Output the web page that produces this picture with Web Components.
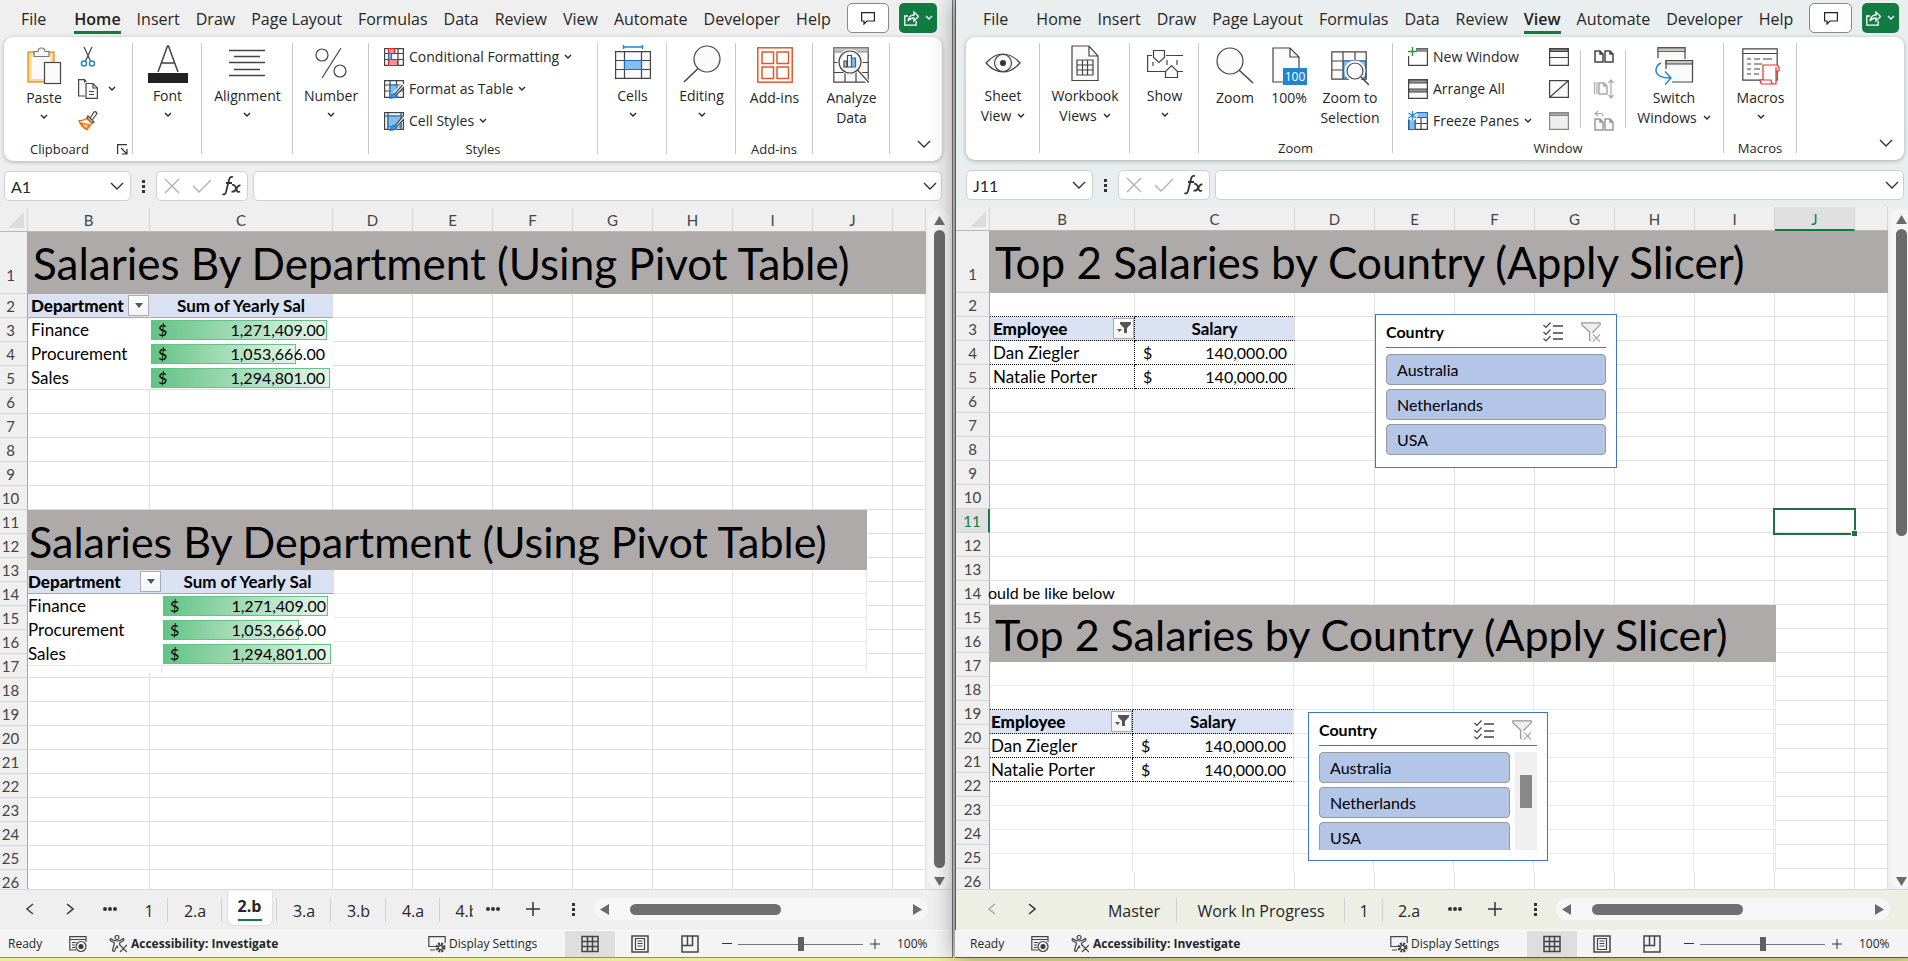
<!DOCTYPE html>
<html lang="en">
<head>
<meta charset="utf-8">
<title>Salaries workbook</title>
<style>
html,body{margin:0;height:100%;overflow:hidden}
body{font:14px/20px "Open Sans","Noto Sans",sans-serif;color:#262626;background:#eceb98}
</style>
</head>
<body>
<desk-top>
  <app-window>
    <menu-bar active="Home"></menu-bar>
    <ribbon-bar>
      <ribbon-group label="Clipboard" kind="clip" launcher style="--gw:129px">
        <big-button icon="paste" label="Paste" low chev style="--w:56px"></big-button>
        <small-stack>
          <small-button icon="cut" name="Cut"></small-button>
          <small-button icon="copy" name="Copy" chev></small-button>
          <small-button icon="brush" name="Format Painter"></small-button>
        </small-stack>
      </ribbon-group>
      <ribbon-group style="--gw:69px"><big-button icon="font" label="Font" chev></big-button></ribbon-group>
      <ribbon-group style="--gw:91px"><big-button icon="align" label="Alignment" chev></big-button></ribbon-group>
      <ribbon-group style="--gw:76px"><big-button icon="percent" label="Number" chev></big-button></ribbon-group>
      <ribbon-group label="Styles" kind="list" style="--gw:229px">
        <small-stack>
          <small-button icon="cond" label="Conditional Formatting" chev></small-button>
          <small-button icon="ftable" label="Format as Table" chev></small-button>
          <small-button icon="cstyle" label="Cell Styles" chev></small-button>
        </small-stack>
      </ribbon-group>
      <ribbon-group style="--gw:69px"><big-button icon="cells" label="Cells" chev></big-button></ribbon-group>
      <ribbon-group style="--gw:69px"><big-button icon="editing" label="Editing" chev></big-button></ribbon-group>
      <ribbon-group label="Add-ins" style="--gw:77px"><big-button icon="addins" label="Add-ins" low></big-button></ribbon-group>
      <ribbon-group style="--gw:77px"><big-button icon="analyze" label="Analyze|Data" low></big-button></ribbon-group>
    </ribbon-bar>
    <formula-bar cell="A1"></formula-bar>
    <sheet-grid sheet="pivot"></sheet-grid>
    <sheet-tabs tabs="…:40,1:38,2.a:54,2.b:55,3.a:54,3.b:55,4.a:54,4.b:54" active="2.b"></sheet-tabs>
    <status-bar></status-bar>
  </app-window>
  <app-window front>
    <menu-bar active="View"></menu-bar>
    <ribbon-bar>
      <ribbon-group style="--gw:74px"><big-button icon="eye" label="Sheet|View" chev inline></big-button></ribbon-group>
      <ribbon-group style="--gw:90px"><big-button icon="workbook" label="Workbook|Views" chev inline></big-button></ribbon-group>
      <ribbon-group style="--gw:69px"><big-button icon="show" label="Show" chev></big-button></ribbon-group>
      <ribbon-group label="Zoom" kind="zoom" style="--gw:194px">
        <big-button icon="zoom" label="Zoom" low style="--w:56px"></big-button>
        <big-button icon="hundred" label="100%" low style="--w:52px"></big-button>
        <big-button icon="zoomsel" label="Zoom to|Selection" low style="--w:70px"></big-button>
      </ribbon-group>
      <ribbon-group label="Window" kind="list" style="--gw:331px">
        <small-stack style="--w:141px">
          <small-button icon="newwin" label="New Window"></small-button>
          <small-button icon="arrange" label="Arrange All"></small-button>
          <small-button icon="freeze" label="Freeze Panes" chev></small-button>
        </small-stack>
        <small-stack rule style="--w:32px">
          <small-button icon="split" name="Split"></small-button>
          <small-button icon="hide" name="Hide"></small-button>
          <small-button icon="unhide" name="Unhide"></small-button>
        </small-stack>
        <small-stack rule style="--w:32px">
          <small-button icon="side" name="View Side by Side"></small-button>
          <small-button icon="sync" name="Synchronous Scrolling"></small-button>
          <small-button icon="reset" name="Reset Window Position"></small-button>
        </small-stack>
        <big-button icon="switch" label="Switch|Windows" low chev inline style="--w:70px"></big-button>
      </ribbon-group>
      <ribbon-group label="Macros" style="--gw:73px"><big-button icon="macros" label="Macros" low chev></big-button></ribbon-group>
    </ribbon-bar>
    <formula-bar cell="J11"></formula-bar>
    <sheet-grid sheet="slicer"></sheet-grid>
    <sheet-tabs start tabs=":40,Master:86,Work In Progress:168,1:38,2.a:52"></sheet-tabs>
    <status-bar></status-bar>
  </app-window>
</desk-top>
<script>
const RESET = `:host,*{box-sizing:border-box}button,input{font:inherit;color:inherit;background:none;border:0;padding:0;margin:0;outline:0}svg{display:block}`;
function define(name, render) {
  customElements.define(name, class extends HTMLElement {
    connectedCallback() {
      if (this.shadowRoot) return;
      const t = document.createElement('template');
      t.innerHTML = render(this);
      this.attachShadow({mode: 'open'}).append(t.content.cloneNode(true));
    }
  });
}
const svg = (w, h, body) => `<svg width="${w}" height="${h}" viewBox="0 0 ${w} ${h}" fill="none" stroke="#444" stroke-width="1.2">${body}</svg>`;
const G = '#444', B = '#1a6fc0', LB = '#83beec';
const CHEV = `<svg width="8" height="6" viewBox="0 0 8 6" fill="none" stroke="#262626" stroke-width="1.4"><path d="M1 1l3 3 3-3"/></svg>`;
const BIGCHEV = `<svg width="14" height="8" viewBox="0 0 14 8" fill="none" stroke="#333" stroke-width="1.4"><path d="M1 1l6 6 6-6"/></svg>`;
const page = (x, y, c) => `<path stroke="${c}" stroke-width="1.5" fill="#fafafa" d="M${x} ${y}h5l3 3v8h-8zM${x+5} ${y}v3h3"/>`;
const ICONS = {
  paste: svg(36,38,`<rect x="2" y="5" width="26" height="30" fill="#f8dc8e" stroke="#e8811a"/><rect x="5.500" y="8" width="19" height="24" fill="#fafafa" stroke="none"/><path d="M8 9.500V4.500h4a3.500 3.500 0 0 1 7 0h4v5z" fill="#f5f5f5" stroke="#7a7974"/><rect x="18.500" y="15.500" width="16" height="21" fill="#fafafa"/>`),
  cut: svg(20,20,`<path d="M6 0l6.500 14M14 0L7.500 14"/><circle cx="6" cy="16.500" r="2.500" stroke="#1e8bcd" stroke-width="1.500"/><circle cx="14" cy="16.500" r="2.500" stroke="#1e8bcd" stroke-width="1.500"/>`),
  copy: svg(20,20,`<path d="M7 17H.6V.6h6L8.500 3M6.500 .6v3"/><path d="M8 4.500h7l4.400 4.400v10.500H8zM15 4.500v4.500h4.400" fill="#fafafa"/><path d="M11 12.500h5M11 15.500h5"/>`),
  brush: svg(20,20,`<path d="M10 5l6 6-2 1-5-5zM12.500 6.500l3.500-5.500q2-1 3 1.500l-4.500 6" fill="#fafafa"/><path d="M8.500 7.500l5.500 5-5 6Q3 16 1 9.500q4 .5 7.500-2z" stroke="#e2700d" fill="#fff"/><path d="M3 12l8 1.500-2 5-3-2z" fill="#f8c26a" stroke="#e2700d"/>`),
  font: svg(40,38,`<path d="M10 27L19.500 1h1L30 27M13.500 18h13" stroke-width="1.500"/><rect x="0" y="28" width="40" height="10" fill="#222" stroke="none"/>`),
  align: svg(36,38,`<path d="M0 5.500h36M5 11.500h26M0 17.500h36M5 24.500h26M0 30.500h36" stroke-width="1.400"/>`),
  percent: svg(32,38,`<circle cx="7" cy="10" r="6"/><circle cx="25" cy="26" r="6"/><path d="M26 3L7 33"/>`),
  cond: svg(20,20,`<path d="M.6 1.600h18.800v16.800H.6zM.6 6.500h18.800M.6 12.500h18.800M14 1v17" fill="#fafafa"/><path d="M4.500 1.500h6v5h-6zM4.500 12.500h9v6h-9z" fill="#f49097" stroke="#dd2020"/><path d="M4.500 6.500h3v6h-3z" fill="${LB}" stroke="${B}"/>`),
  ftable: svg(20,20,`<path d="M.6 1.600h18.800v16.800H.6zM.6 6h18.800M.6 12h18.800M6 1v17M12.500 1v17" fill="#fafafa"/><path d="M6 6h7v12H6z" fill="${LB}" stroke="${B}"/><path d="M7 17l11-12 2 1-9 12z" fill="#fff" stroke="#fff"/><path d="M18.500 6L11 14.500l1.500 1.500L20 8"/><path d="M10.500 14.500q2.500 0 2 2.500-1.500 2.500-7.500 2 3-1 2.500-3 1-1.500 3-1.500z" fill="#3a96dd" stroke="${B}"/>`),
  cstyle: svg(20,20,`<path d="M.6 1.600h18.800v16.800H.6zM.6 5h18.800M4 1v17M17 1v17" fill="#fafafa"/><path d="M4 5h13v11H4z" fill="${LB}" stroke="${B}"/><path d="M9 17l10-11 1 1-8 11z" fill="#fff" stroke="#fff"/><path d="M18.500 6L11 14.500l1.500 1.500L20 8"/><path d="M10.500 14.500q2.500 0 2 2.500-1.500 2.500-7.500 2 3-1 2.500-3 1-1.500 3-1.500z" fill="#3a96dd" stroke="${B}"/>`),
  cells: svg(36,38,`<path d="M8.500 0v4M27.500 0v4M8.500 2h19" stroke="#1e8bcd" stroke-width="1.500"/><path d="M.6 6.600h34.800v26.800H.6zM.6 15.500h34.800M.6 24.500h34.800M9.500 6v27M26.500 6v27" fill="#fafafa"/><path d="M9.500 15.500h17v9h-17z" fill="${LB}" stroke="${B}"/>`),
  editing: svg(38,38,`<circle cx="24" cy="14" r="13" fill="#fafafa"/><path d="M15 23.500L1 37" stroke-width="1.500"/>`),
  addins: svg(36,38,`<g stroke="#dc5a2e" stroke-width="1.500"><rect x=".8" y=".8" width="34.400" height="34.400"/><rect x="5" y="5" width="11.500" height="11.500"/><rect x="20" y="5" width="11.500" height="11.500"/><rect x="5" y="20" width="11.500" height="11.500"/><rect x="20" y="20" width="11.500" height="11.500"/></g>`),
  analyze: svg(36,38,`<path d="M.8 .8h34.400v34.400H.8z" fill="#fafafa"/><path d="M1 1h34v4H1z" fill="#c8c6c4" stroke="#888"/><path d="M1 15.500h34M1 25.500h34M12 25v10M23 25v10"/><circle cx="17" cy="15" r="11" fill="#fff" stroke="#fff" stroke-width="3"/><path d="M24 23l11 12" stroke="#fff" stroke-width="4"/><circle cx="17" cy="15" r="11" fill="#fafafa"/><path d="M11 20v-6h3v6z" fill="#c8c6c4"/><path d="M14.500 20V8.500h4V20z" fill="#fff"/><path d="M18.500 20v-9h4v9z" fill="${LB}" stroke="${B}"/><path d="M24.500 23l11 12"/>`),
  eye: svg(36,38,`<path d="M1 18Q9 9 18 9t17 9Q27 27 18 27T1 18z" fill="#fafafa"/><circle cx="18" cy="18" r="8.500"/><circle cx="18" cy="18" r="2.500" fill="#333"/>`),
  workbook: svg(28,38,`<path d="M1 1h17l9 10v24.500H1zM18 1v10h9" fill="#fafafa"/><path d="M6 15h16v15H6zM6 20h16M6 25h16M11.500 15v15M16.500 15v15"/>`),
  show: svg(36,38,`<path d="M5 10.500H.6v16H18M19 10.500h17M31 26.500h5M6 17v4M20 15v5M30 15v5"/><path d="M6.500 5.500h11v7l-5.500 5-5.500-5zM18.500 32.500h12v-6l-6-6-6 6z" fill="#fafafa"/>`),
  zoom: svg(38,38,`<circle cx="14" cy="14" r="13" fill="#fafafa"/><path d="M23 23l14 13" stroke-width="1.500"/>`),
  hundred: svg(36,38,`<path d="M2 1h17l9 9v25H2zM19 1v9h9" fill="#fafafa"/><path d="M12 21h24v17H12z" fill="#1e86cf" stroke="none"/><text x="24" y="34" text-anchor="middle" font-family="Open Sans" font-size="12" fill="#fff" stroke="none">100</text>`),
  zoomsel: svg(38,38,`<path d="M.8 4.800h34.400v27.400H.8zM.8 14h34.400M.8 23h34.400M12 5v27M24 5v27" fill="#fafafa"/><path d="M12.500 14h22v17h-22z" fill="${LB}" stroke="${B}"/><circle cx="24" cy="24" r="9" fill="#fafafa" stroke="#fff" stroke-width="3"/><circle cx="24" cy="24" r="8" fill="#fafafa"/><path d="M30 30l8 8" stroke-width="1.500"/>`),
  newwin: svg(20,20,`<path d="M8 1.600h11.400v16.800H.6V9M8 4h11" fill="none"/><path d="M8 1.500h11.500V4H8z" fill="#888" stroke="none"/><path d="M4.500 0v9M0 4.500h9" stroke="#2a9a4a" stroke-width="1.500"/>`),
  arrange: svg(20,20,`<path d="M.6 .6h18.800v18.800H.6z" fill="#fafafa"/><path d="M1 1h18v3H1zM1 10h18v3H1z" fill="#999"/>`),
  freeze: svg(20,20,`<path d="M6 1.600h13.400v16.800H.6V9M.6 12.500H19M7 6.500v12M13 2v16" fill="none"/><path d="M7 1.500h12.500v5H7zM1 7h6v11.500H1z" fill="${LB}" stroke="${B}"/><circle cx="4.500" cy="4.500" r="5" fill="#fff" stroke="none"/><path d="M4.500 0v9M.5 2l8 5M8.500 2l-8 5" stroke="#1e86cf"/>`),
  split: svg(20,20,`<path d="M.6 1.600h18.800v16.800H.6zM.6 10.500h18.800" fill="#fafafa"/><path d="M1 2h18v2.500H1z" fill="#888"/>`),
  hide: svg(20,20,`<path d="M.6 1.600h18.800v16.800H.6zM1 18L19 2" fill="#fafafa"/>`),
  unhide: svg(20,20,`<path d="M.6 1.600h18.800v16.800H.6z" fill="#eee" stroke="#888"/><path d="M1 2h18v2.500H1z" fill="#aaa" stroke="#888"/>`),
  side: svg(20,20,`${page(1,4,G)}${page(11,4,G)}`),
  sync: svg(20,20,`<path d="M.6 3v12M3 3v12" stroke="#aaa"/>${page(5,4,'#aaa')}<path d="M17 1v18M14.500 4L17 1l2.500 3M14.500 16l2.500 3 2.500-3" stroke="#aaa"/>`),
  reset: svg(20,20,`${page(1,8,'#999')}${page(11,8,'#999')}<path d="M1 2.500h6q2 0 2 3M4 0L1 2.500 4 5" stroke="#aaa"/>`),
  switch: svg(40,38,`<path d="M4 11V.6h27V12" fill="#fafafa"/><path d="M4 1h27v3.500H4z" fill="#c8c6c4" stroke="#666"/><path d="M12 13.500h26.500v21.500H18M12 13v9" fill="#fafafa"/><path d="M12 13.500h26.500V17H12z" fill="#c8c6c4"/><path d="M7 16q-5 2-5 8 1 7 15 7M11 24.500l6 6.500-6 6.500" stroke="#1e8bcd" stroke-width="1.500"/>`),
  macros: svg(38,38,`<path d="M.8 1.800h34.400v31.400H.8zM.8 6.500h34.400" fill="#fafafa"/><path d="M5 12h4M5 17h4M5 22h4M5 27h4M12 12h6M21 12h9M12 17h8M12 22h6M12 27h5"/><path d="M21 33V18h13q3 0 3 3v3h-3v13H20q-2-1-2-4h11q0 4 3 4M34 24v-4" fill="#fff" stroke="#e83030"/>`),
  fx: `<svg width="20" height="22" viewBox="0 0 20 22" fill="none" stroke="#333" stroke-width="1.800"><path d="M11 2q-3-1-4 3L4 17q-1 3.500-3.500 2M4 8h6"/><path d="M10 10q3-1 4 3.500 1 4.500 4 3M18.500 10.500q-2-1-4 3-2 4-5 3" /></svg>`,
  macrorec: svg(18,18,`<path d="M17 7V1.600H.8V15H7M.8 4.500H17M3 7.500h4M3 10h3M3 12.500h3"/><circle cx="12" cy="11.500" r="5"/><circle cx="12" cy="11.500" r="2" fill="#333"/>`),
  access: svg(18,18,`<circle cx="8" cy="2.500" r="2"/><path d="M1.500 3.500q3 2.500 6.500 2.500t6.500-2.500q1 1.500-.5 2.500L10.500 8l.5 3M1.500 3.500q-1 1.500.5 2.500l3.500 2-2 7.500q1 1.500 2 .5L8 11l1 2M11 10l7 7M18 10l-7 7"/>`),
  display: svg(18,18,`<path d="M8 11.500H.8V1.600h16.400V8M2 15h5"/><circle cx="12.500" cy="12.500" r="3.800" stroke-width="2.500" stroke-dasharray="2 1"/><circle cx="12.500" cy="12.500" r="2.200"/>`),
  vgrid: svg(18,18,`<path d="M1 1.500h16v15H1zM1 6.500h16M1 11.500h16M6.500 1v16M11.500 1v16" stroke-width="1.500"/>`),
  vpage: svg(18,18,`<path d="M1 1h16v16H1z" stroke-width="1.500"/><path d="M4.500 3.500h9v11h-9zM6.500 6h5M6.500 8.500h5M6.500 11h5"/>`),
  vbreak: svg(18,18,`<path d="M1 1h16v16H1zM1 10.500h10.500V1M6.500 1v9" stroke-width="1.500"/>`),
  check: svg(20,20,`<path d="M10 4h10M10 11h10M10 17h10" stroke-width="1.600"/><path d="M.5 3l2.500 2.500L7.500 .5M.5 10L3 12.500 7.500 7.500M.5 16.500L3 19l4.500-5"/>`),
  clear: svg(20,20,`<path d="M.8 .8h18.400v2L12 10v9.500L8.500 18v-8L.8 2.800z" fill="#eee" stroke="#999"/><path d="M11 12l8 8M19 12l-8 8" stroke="#fff" stroke-width="4"/><path d="M12 12.500l7 7M19 12.500l-7 7" stroke="#aaa"/>`)
};
define('ui-icon', e => `<style>:host{display:block;flex:none}svg{display:block}</style>${ICONS[e.getAttribute('name')]}`);
const ico = n => `<ui-icon name="${n}"></ui-icon>`;

define('desk-top', () => `<style>${RESET}:host{display:grid;grid-template-columns:minmax(0,1fr) minmax(0,1fr);gap:2px;height:100vh;margin:0 -7px;padding-bottom:3px;background:linear-gradient(#eceb98,#eceb98) bottom/100% 3px no-repeat,#c9cccc}</style><slot></slot>`);

define('app-window', () => `<style>${RESET}
:host{display:flex;flex-direction:column;min-width:0;min-height:0;padding-left:7px;background:#efefef;border-right:1px solid #777;border-bottom:1px solid #8a8a8a;--rib:124px;position:relative}
:host([front]){padding-left:6px;border-left:1px solid #107c41;border-bottom-color:#107c41;background:linear-gradient(#eaeeef,#e8eeed 200px,#edeee4 700px);box-shadow:0 0 22px rgba(0,0,0,.4);--rib:123px;z-index:1}
</style><slot></slot>`);

define('menu-bar', e => `<style>${RESET}
:host{display:flex;height:37px;flex:none;font-size:16px;padding:0 15px 0 21px;align-items:flex-start}
nav{display:flex;flex:1}
.tab{height:34px;padding:7px 0 0;line-height:24px;margin-right:var(--g,16px);white-space:nowrap;display:block;border-bottom:3px solid transparent}
.tab:first-child{--g:28px}
.on{font-weight:600;border-color:#107c41;color:#222}
.c,.s{height:30px;margin-top:3px;border-radius:5px;display:flex;align-items:center;justify-content:center;gap:6px}
.c{width:44px;border:1px solid #888;background:#fff;margin-right:10px}
.s{width:39px;background:#107c41}
</style><nav>${['File','Home','Insert','Draw','Page Layout','Formulas','Data','Review','View','Automate','Developer','Help'].map(t => `<button class="tab${t===e.getAttribute('active')?' on':''}">${t}</button>`).join('')}</nav>
<button class="c" aria-label="Comments"><svg width="14" height="13" viewBox="0 0 14 13" fill="none" stroke="#222" stroke-width="1.200"><path d="M.6 .6h12.800v8.400H6l-3 3V9H.6z"/></svg></button>
<button class="s" aria-label="Share"><svg width="15" height="15" viewBox="0 0 15 15" fill="none" stroke="#fff" stroke-width="1.300"><path d="M4 5H.8v9.200h11.400V10M4 10q1-6 6-6V1l4.500 4.500L10 10V7q-4 0-6 3z"/></svg><svg width="8" height="6" viewBox="0 0 8 6" fill="none" stroke="#fff" stroke-width="1.400"><path d="M1 1l3 3 3-3"/></svg></button>`);

define('ribbon-bar', () => `<style>${RESET}
:host{display:flex;height:var(--rib);margin:0 10px 0 4px;background:#fff;border-radius:9px;box-shadow:0 1px 4px rgba(0,0,0,.28);flex:none}
.x{margin:auto 11px 13px auto;height:8px}</style><slot></slot><button class="x" aria-label="Collapse ribbon">${BIGCHEV}</button>`);

define('ribbon-group', e => `<style>${RESET}
:host{display:flex;flex-direction:column;flex:none;width:var(--gw);position:relative;font-size:14px}
:host::after{content:"";position:absolute;right:0;top:6px;bottom:7px;width:1px;background:#c9c9c9}
.b{flex:1;display:flex;justify-content:center;align-items:flex-start}
:host([kind=clip]) .b{justify-content:flex-start;padding-left:12px;gap:6px}
:host([kind=list]) .b{justify-content:flex-start;padding-left:15px}
:host([kind=zoom]) .b{justify-content:flex-start;padding-left:8px}
.l{height:22px;font-size:13px;line-height:20px;padding-right:1px;display:flex;justify-content:center}
:host([launcher]) .l{padding-left:26px;justify-content:space-between;padding-right:5px}
.l svg{margin-top:5px}
</style><div class="b"><slot></slot></div><div class="l"><span>${e.getAttribute('label')||''}</span>${e.hasAttribute('launcher')?`<svg width="11" height="11" viewBox="0 0 11 11" fill="none" stroke="#333" stroke-width="1.200"><path d="M.6 10V.6H10M4 4l6 6M10 5v5H5"/></svg>`:''}</div>`);

define('big-button', e => {
  const inline = e.hasAttribute('inline'), c = e.hasAttribute('chev');
  const lines = e.getAttribute('label').split('|');
  return `<style>${RESET}
:host{display:block;flex:none;width:var(--w,auto);padding-top:8px}
:host([low]){padding-top:10px}
button{display:flex;flex-direction:column;align-items:center;width:100%}
.t{margin-top:3px;line-height:20px;white-space:nowrap;display:flex;flex-direction:column;align-items:center}
.t span{display:flex;align-items:center;gap:6px}
.c{margin-top:6px}
</style><button>${ico(e.getAttribute('icon'))}<span class="t">${lines.map((l,i)=>`<span>${l}${c&&inline&&i===lines.length-1?CHEV:''}</span>`).join('')}</span>${c&&!inline?`<span class="c">${CHEV}</span>`:''}</button>`;
});
define('small-stack', () => `<style>:host{display:flex;flex-direction:column;padding-top:4px;width:var(--w,auto);flex:none}
:host([rule]){background:linear-gradient(#c9c9c9,#c9c9c9) right 13px/1px 78px no-repeat;margin-right:13px}</style><slot></slot>`);
define('small-button', e => `<style>${RESET}:host{display:block;height:32px}button{height:32px;display:flex;align-items:center;gap:5px;white-space:nowrap}
.c{margin-left:${e.getAttribute('label')?'0':'5px'}}</style><button aria-label="${e.getAttribute('label')||e.getAttribute('name')}">${ico(e.getAttribute('icon'))}${e.getAttribute('label')?`<span>${e.getAttribute('label')}</span>`:''}${e.hasAttribute('chev')?`<span class="c">${CHEV}</span>`:''}</button>`);

define('formula-bar', e => `<style>${RESET}
:host{display:flex;height:30px;margin:10px 10px 7px 4px;flex:none;align-items:stretch}
.box{background:#fff;border:1px solid #cfcfcf;border-radius:5px;display:flex;align-items:center}
.n{width:127px;padding:0 6px}.n input{font:16px "Lato",sans-serif;width:100px;flex:1;min-width:0}
.d{width:25px;display:flex;align-items:center;justify-content:center}
.f{width:92px;margin-right:5px;padding:0}
.f button{width:30px;display:flex;justify-content:center}
.i{flex:1;padding:0 4px}.i input{flex:1;min-width:0}
</style><div class="box n"><input aria-label="Name box" value="${e.getAttribute('cell')}"><button aria-label="Names">${BIGCHEV}</button></div>
<div class="d"><svg width="3" height="13"><path d="M0 0h3v3H0zM0 5h3v3H0zM0 10h3v3H0z" fill="#333"/></svg></div>
<div class="box f"><button aria-label="Cancel"><svg width="16" height="16" viewBox="0 0 16 16" fill="none" stroke="#b0b0b0" stroke-width="1.300"><path d="M1 1l14 14M15 1L1 15"/></svg></button><button aria-label="Enter"><svg width="20" height="14" viewBox="0 0 20 14" fill="none" stroke="#b0b0b0" stroke-width="1.300"><path d="M1 7l6 6L19 1"/></svg></button><button aria-label="Insert function">${ICONS.fx}</button></div>
<div class="box i"><input aria-label="Formula"><button aria-label="Expand formula bar">${BIGCHEV}</button></div>`);

const CELLS = `
table{border-collapse:separate;border-spacing:0;table-layout:fixed;width:100%}
td{height:24px;padding:0;border-right:1px solid var(--line,#dfdfdf);border-bottom:1px solid var(--line,#dfdfdf);font:17px/22px "Lato","Open Sans",sans-serif;color:#000;white-space:nowrap;background:#fff}
.hd{font-weight:700;background:#d9e1f2}
.pv{border-right-color:transparent;border-bottom-color:transparent}
.last{border-bottom-color:var(--line,#dfdfdf)}
.ph{border-bottom-color:#8ea9db;border-right-color:#d9e1f2}
.in{display:flex;align-items:center;height:23px;padding-left:var(--pl,3px)}
.in b{flex:1}
.mid{text-align:center}
.dot{border-bottom:1px dotted #000}.dot.k{border-right:1px dotted #000}
.dotr{border-bottom:1px dotted #000}
.drop{width:21px;height:21px;flex:none;border:1px solid #a9adb5;background:linear-gradient(#fff,#f1f3f6);display:flex;align-items:center;justify-content:center}
.m{display:grid;grid-template-columns:100%;height:23px;align-items:center;padding-left:1px;font-size:16px}
.m>*{grid-area:1/1}
.m i{height:20px;width:var(--b);border:1px solid #63c384;background:linear-gradient(90deg,#63c384,#e6f5ea);justify-self:start}
.m>span{display:flex;justify-content:space-between;padding:0 7px;z-index:1}
.ttl{background:#aeaaaa;font-size:44px;line-height:54px;padding-left:5px;border-color:#aeaaaa;overflow:hidden}
`;
const drop = f => `<button class="drop" aria-label="Filter">${f?`<svg width="14" height="13" viewBox="0 0 14 13" fill="#555"><path d="M3 0h11v2l-4 4v5H7V6L3 2zM0 7h5L2.500 10z"/></svg>`:`<svg width="8" height="5" viewBox="0 0 8 5" fill="#555"><path d="M0 0h8L4 5z"/></svg>`}</button>`;
const money = (v, b) => `<div class="m" ${b?`style="--b:${b}%"`:''}>${b?'<i></i>':''}<span><span>$</span><span>${v}</span></span></div>`;

const SHEETS = {
  pivot: {
    cols: [['B',122],['C',183],['D',80],['E',80],['F',80],['G',80],['H',80],['I',80],['J',80],['',34]],
    title: 'Salaries By Department (Using Pivot Table)',
    cell(c, r) {
      if (c > 1 || r < 2 || r > 5) return null;
      if (r === 2) return c ? ['hd ph mid','Sum of Yearly Sal'] : ['hd ph',`<div class="in"><b>Department</b>${drop()}</div>`];
      const d = [['Finance','1,271,409.00',97],['Procurement','1,053,666.00',80],['Sales','1,294,801.00',99]][r-3];
      return ['pv'+(r===5?' last':''), c ? money(d[1],d[2]) : `<div class="in">${d[0]}</div>`];
    },
    over: `<pasted-range kind="pivot" class="over" style="left:34px;top:302px;width:839px;height:163px"></pasted-range>`
  },
  slicer: {
    cols: [['B',145],['C',160],['D',80],['E',80],['F',80],['G',80],['H',80],['I',80],['J',80],['',34]],
    title: 'Top 2 Salaries by Country (Apply Slicer)', sel: ['J',11],
    cell(c, r) {
      if (c > 1) return null;
      if (r === 14) return c ? null : ['','<div style="width:144px;margin-left:-2px;font-size:16px">ould be like below</div>'];
      if (r < 2 || r > 5) return null;
      const k = c ? 'dotr' : 'dot k';
      if (r === 2) return ['dotr',''];
      if (r === 3) return c ? ['hd mid '+k,'Salary'] : ['hd '+k,`<div class="in"><b>Employee</b>${drop(1)}</div>`];
      return [k, c ? money('140,000.00') : `<div class="in">${r===4?'Dan Ziegler':'Natalie Porter'}</div>`];
    },
    over: `<pasted-range kind="slicer" class="over" style="left:34px;top:398px;width:786px;height:267px"></pasted-range>
      <slicer-panel class="over" style="left:419px;top:107px;width:242px;height:154px"></slicer-panel>
      <slicer-panel scroll class="over" style="left:352px;top:505px;width:240px;height:149px"></slicer-panel>
      <div class="over cur" style="left:817px;top:301px;width:83px;height:27px"></div>`
  }
};
define('pasted-range', e => {
  const p = e.getAttribute('kind') === 'pivot', s = SHEETS[p ? 'pivot' : 'slicer'];
  const w = p ? [134,172,79,80,80,80,80,80,54] : [143,161,80,80,80,80,80,80,2];
  let rows = '';
  for (let r = p ? 2 : 1; r < (p ? 7 : 10); r++) {
    rows += '<tr>' + w.map((_, c) => {
      const q = r < 6 && r > 1 ? s.cell(c, r) : null;
      return q ? `<td class="${q[0]}">${q[1]}</td>` : '<td></td>';
    }).join('') + '</tr>';
  }
  return `<style>${RESET}${CELLS}
:host{display:block;overflow:hidden;background:#fff;--line:#e8e8e8;--pl:${p?0:1}px}
.ttl{height:${p?60:57}px;padding-left:${p?1:5}px;font:43px/${p?64:60}px "Lato",sans-serif;color:#000;white-space:nowrap}
</style><div class="ttl">${s.title}</div><table><colgroup>${w.map(x=>`<col style="width:${x}px">`).join('')}</colgroup>${rows}</table>`;
});

define('slicer-panel', e => `<style>${RESET}
:host{display:flex;flex-direction:column;background:#fff;border:1px solid #4472c4;padding:5px 10px 10px;font:16px/20px "Lato",sans-serif;color:#000}
header{display:flex;align-items:center;height:28px;border-bottom:1px solid #4472c4;font-weight:700;padding:0 5px 4px 0;flex:none}
header span{flex:1}header button+button{margin-left:18px}
.w{display:flex;flex:1;min-height:0;margin-top:6px;gap:5px}
.l{flex:1;display:flex;flex-direction:column;gap:4px;overflow:hidden}
.l button{height:31px;flex:none;border:1px solid #999;border-radius:4px;background:#b4c6e7;text-align:left;padding-left:10px}
.s{width:22px;background:#f0f0f0;padding:23px 5px}.s::before{content:"";display:block;height:33px;background:#888}
</style><header><span>Country</span><button aria-label="Multi-select">${ico('check')}</button><button aria-label="Clear filter">${ico('clear')}</button></header>
<div class="w"><div class="l"><button>Australia</button><button>Netherlands</button><button>USA</button></div>${e.hasAttribute('scroll')?'<div class="s"></div>':''}</div>`);

define('sheet-grid', e => {
  const s = SHEETS[e.getAttribute('sheet')], sel = s.sel || [];
  let rows = '';
  for (let r = 1; r <= 26; r++) {
    rows += `<tr><th class="rn${r===sel[1]?' on':''}${r===1?' r1':''}" scope="row">${r}</th>`;
    if (r === 1) rows += `<td class="ttl" colspan="10">${s.title}</td>`;
    else s.cols.forEach((_, c) => { const q = s.cell(c, r); rows += q ? `<td class="${q[0]}">${q[1]}</td>` : '<td></td>'; });
    rows += '</tr>';
  }
  return `<style>${RESET}${CELLS}
:host{display:flex;flex:1 1 0;min-height:0;margin-left:-6px;overflow:hidden;background:#efefef;border-bottom:1px solid #d8d8d8}
:host([sheet=pivot]){margin-left:-7px}
:host([sheet=pivot]) .view{padding-left:1px}
.view{flex:1;min-width:0;position:relative;overflow:hidden;background:#efefef}
.view .holder{position:relative}
th{font:400 15px/20px "Lato",sans-serif;color:#444;padding:0;background:#efefef}
.ch{height:24px;border-right:1px solid #d4d4d4;border-bottom:1px solid #b8b8b8;padding-top:1px}
.rn{border-bottom:1px solid #d4d4d4;border-right:1px solid #a6a6a6;height:24px}
.r1{height:62px;vertical-align:bottom;padding-bottom:8px}
.ch.on{background:#e0e0e0;color:#107c41;border-bottom:2px solid #107c41}
.rn.on{background:#e0e0e0;color:#107c41;border-right:2px solid #107c41}
.corner{position:relative;text-align:right}
.corner svg{margin:0 3px 0 auto}
.over{position:absolute}
.cur{border:2px solid #1e7145}
.cur::after{content:"";position:absolute;right:-4px;bottom:-4px;width:5px;height:5px;background:#1e7145;border:1px solid #fff}
.sb{width:26px;flex:none;padding:2px 2px 0}
.tr{height:100%;border-radius:11px;background:#f5f5f5;display:flex;flex-direction:column;align-items:center;padding:6px 0 3px}
.th{width:11px;border-radius:6px;background:#6b6b6b;margin:5px 0 9px;flex:1}
.sp{flex:0}
:host([sheet=slicer]) .th{flex:0 0 307px}
:host([sheet=slicer]) .sp{flex:1}
</style><div class="view"><div class="holder"><table><colgroup><col style="width:34px">${s.cols.map(c=>`<col ${c[0]?`style="width:${c[1]}px"`:''}>`).join('')}</colgroup>
<tr><th class="ch corner"><svg width="16" height="16"><path d="M16 0v16H0z" fill="#dcdcdc"/></svg></th>${s.cols.map(c=>`<th class="ch${c[0]&&c[0]===sel[0]?' on':''}" scope="col">${c[0]}</th>`).join('')}</tr>${rows}</table>${s.over}</div></div>
<div class="sb"><div class="tr"><svg width="11" height="9"><path d="M5.500 0L11 9H0z" fill="#6b6b6b"/></svg><div class="th"></div><div class="sp"></div><svg width="11" height="9"><path d="M5.500 9L11 0H0z" fill="#6b6b6b"/></svg></div></div>`;
});

define('sheet-tabs', e => {
  const a = e.getAttribute('active'), dots = `<svg width="14" height="4" fill="#333"><circle cx="2" cy="2" r="2"/><circle cx="7" cy="2" r="2"/><circle cx="12" cy="2" r="2"/></svg>`;
  const tabs = e.getAttribute('tabs').split(',').map(t => t.split(':'));
  const arrow = (d, c) => `<svg width="8" height="12" viewBox="0 0 8 12" fill="none" stroke="${c}" stroke-width="1.500"><path d="${d}"/></svg>`;
  return `<style>${RESET}
:host{display:flex;height:40px;flex:none;font-size:16px;padding-left:10px;align-items:stretch}
button{display:flex;align-items:center;justify-content:center;flex:none;width:40px;height:38px}
.strip{flex:1;min-width:0;overflow:hidden;display:flex}
.tab{width:auto;height:40px;position:relative;padding-top:1px}
.tab::after{content:"";position:absolute;right:0;top:8px;height:24px;width:1px;background:#cfcfcf}
.dots::after,.tab:last-child::after{display:none}
.dots{padding:0 0 2px}
.on span{font-weight:700;background:#fff;border-radius:0 0 6px 6px;box-shadow:0 0 1px 1px #ddd;height:35px;width:44px;margin:-1px 0 auto;padding:5px 10px 0;line-height:22px;clip-path:inset(1px -2px -2px -2px)}
.on span::after{content:"";display:block;height:2px;background:#107c41;margin-top:2px}
.h{width:334px;height:22px;margin:8px 24px 0 0;border-radius:11px;background:#f6f6f6;display:flex;align-items:center;padding:0 6px;justify-content:space-between}
.h div{width:151px;height:11px;border-radius:6px;background:#6f6f6f;margin:0 auto 0 21px}
.m{margin-right:1px}
</style><button aria-label="Previous sheets">${arrow('M7 1L1 6l6 5', e.hasAttribute('start')?'#aaa':'#444')}</button><button aria-label="Next sheets">${arrow('M1 1l6 5-6 5','#333')}</button>
<div class="strip">${tabs.map(([t,w]) => t==='…' ? `<button class="tab dots" style="width:${w}px" aria-label="More sheets">${dots}</button>` : t ? `<button class="tab${t===a?' on':''}" style="width:${w}px"><span>${t}</span></button>` : `<div style="width:${w}px"></div>`).join('')}</div>
<button aria-label="More sheets">${dots}</button><button aria-label="New sheet"><svg width="14" height="14" stroke="#333" stroke-width="1.500"><path d="M7 0v14M0 7h14"/></svg></button>
<button class="m" aria-label="Resize tabs"><svg width="3" height="13"><path d="M0 0h3v3H0zM0 5h3v3H0zM0 10h3v3H0z" fill="#333"/></svg></button>
<div class="h"><svg width="9" height="11"><path d="M9 0v11L0 5.500z" fill="#6b6b6b"/></svg><div></div><svg width="9" height="11"><path d="M0 0v11l9-5.500z" fill="#6b6b6b"/></svg></div>`;
});

define('status-bar', () => `<style>${RESET}
:host{display:flex;height:27px;margin-left:-7px;padding-left:15px;flex:none;background:#f4f4f4;border-top:1px solid #fff;font-size:12px;align-items:stretch}
button,span{display:flex;align-items:center;white-space:nowrap}
.r{width:61px}.m{width:40px}.a{gap:4px;font-weight:700}.d{margin-left:auto;width:137px;gap:3px}
.v{width:50px;justify-content:center}.on{background:#dedede}
.z{width:23px;justify-content:center}
input{appearance:none;width:125px;align-self:center;height:14px;background:linear-gradient(#777,#777) center/100% 1px no-repeat}
input::-webkit-slider-thumb{appearance:none;width:6px;height:14px;background:#5f5f5f}
.p{width:66px;padding-left:11px}
</style><span class="r">Ready</span><button class="m" aria-label="Record macro">${ico('macrorec')}</button><button class="a">${ico('access')}Accessibility: Investigate</button>
<button class="d">${ico('display')}Display Settings</button><button class="v on" aria-label="Normal">${ico('vgrid')}</button><button class="v" aria-label="Page layout">${ico('vpage')}</button><button class="v" aria-label="Page break preview">${ico('vbreak')}</button>
<button class="z" aria-label="Zoom out"><svg width="10" height="2"><path d="M0 0h10v1H0z" fill="#333"/></svg></button><input type="range" min="0" max="100" value="50" aria-label="Zoom"><button class="z" aria-label="Zoom in"><svg width="10" height="10" stroke="#333"><path d="M5 0v10M0 5h10"/></svg></button><span class="p">100%</span>`);
</script>
</body>
</html>
